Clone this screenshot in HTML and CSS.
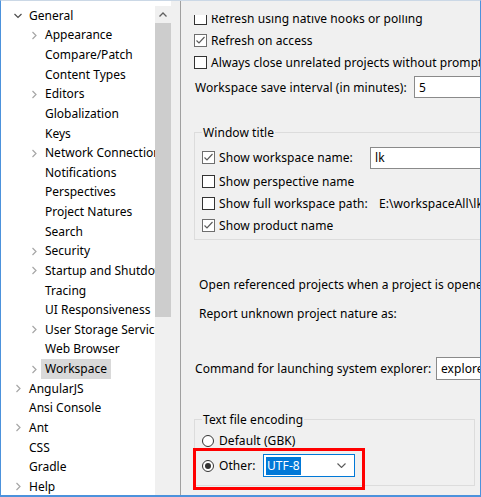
FILE: index.html
```html
<!DOCTYPE html>
<html>
<head>
<meta charset="utf-8">
<title>Preferences - Workspace</title>
<link rel="stylesheet" href="styles.css">
</head>
<body>
<div class="window">
  <aside class="tree-pane">
    <ul class="tree">
      <li class="row l0"><span class="tw"><svg width="8" height="8" viewBox="0 0 8 8"><polyline points="0.5,2 4,5.5 7.5,2" fill="none" stroke="#4d4d4d" stroke-width="1.2"/></svg></span><span class="lbl">General</span></li>
      <li class="row l1"><span class="tw"><svg width="8" height="9" viewBox="0 0 8 9"><polyline points="2.5,1 6,4.5 2.5,8" fill="none" stroke="#a6a6a6" stroke-width="1.2"/></svg></span><span class="lbl">Appearance</span></li>
      <li class="row l1"><span class="tw"></span><span class="lbl">Compare/Patch</span></li>
      <li class="row l1"><span class="tw"></span><span class="lbl">Content Types</span></li>
      <li class="row l1"><span class="tw"><svg width="8" height="9" viewBox="0 0 8 9"><polyline points="2.5,1 6,4.5 2.5,8" fill="none" stroke="#a6a6a6" stroke-width="1.2"/></svg></span><span class="lbl">Editors</span></li>
      <li class="row l1"><span class="tw"></span><span class="lbl">Globalization</span></li>
      <li class="row l1"><span class="tw"></span><span class="lbl">Keys</span></li>
      <li class="row l1"><span class="tw"><svg width="8" height="9" viewBox="0 0 8 9"><polyline points="2.5,1 6,4.5 2.5,8" fill="none" stroke="#a6a6a6" stroke-width="1.2"/></svg></span><span class="lbl">Network Connections</span></li>
      <li class="row l1"><span class="tw"></span><span class="lbl">Notifications</span></li>
      <li class="row l1"><span class="tw"></span><span class="lbl">Perspectives</span></li>
      <li class="row l1"><span class="tw"></span><span class="lbl">Project Natures</span></li>
      <li class="row l1"><span class="tw"></span><span class="lbl">Search</span></li>
      <li class="row l1"><span class="tw"><svg width="8" height="9" viewBox="0 0 8 9"><polyline points="2.5,1 6,4.5 2.5,8" fill="none" stroke="#a6a6a6" stroke-width="1.2"/></svg></span><span class="lbl">Security</span></li>
      <li class="row l1"><span class="tw"><svg width="8" height="9" viewBox="0 0 8 9"><polyline points="2.5,1 6,4.5 2.5,8" fill="none" stroke="#a6a6a6" stroke-width="1.2"/></svg></span><span class="lbl">Startup and Shutdown</span></li>
      <li class="row l1"><span class="tw"></span><span class="lbl">Tracing</span></li>
      <li class="row l1"><span class="tw"></span><span class="lbl">UI Responsiveness</span></li>
      <li class="row l1"><span class="tw"><svg width="8" height="9" viewBox="0 0 8 9"><polyline points="2.5,1 6,4.5 2.5,8" fill="none" stroke="#a6a6a6" stroke-width="1.2"/></svg></span><span class="lbl">User Storage Service</span></li>
      <li class="row l1"><span class="tw"></span><span class="lbl">Web Browser</span></li>
      <li class="row l1"><span class="tw"><svg width="8" height="9" viewBox="0 0 8 9"><polyline points="2.5,1 6,4.5 2.5,8" fill="none" stroke="#a6a6a6" stroke-width="1.2"/></svg></span><span class="lbl selected">Workspace</span></li>
      <li class="row l0"><span class="tw"><svg width="8" height="9" viewBox="0 0 8 9"><polyline points="2.5,1 6,4.5 2.5,8" fill="none" stroke="#a6a6a6" stroke-width="1.2"/></svg></span><span class="lbl">AngularJS</span></li>
      <li class="row l0"><span class="tw"></span><span class="lbl">Ansi Console</span></li>
      <li class="row l0"><span class="tw"><svg width="8" height="9" viewBox="0 0 8 9"><polyline points="2.5,1 6,4.5 2.5,8" fill="none" stroke="#a6a6a6" stroke-width="1.2"/></svg></span><span class="lbl">Ant</span></li>
      <li class="row l0"><span class="tw"></span><span class="lbl">CSS</span></li>
      <li class="row l0"><span class="tw"></span><span class="lbl">Gradle</span></li>
      <li class="row l0"><span class="tw"><svg width="8" height="9" viewBox="0 0 8 9"><polyline points="2.5,1 6,4.5 2.5,8" fill="none" stroke="#a6a6a6" stroke-width="1.2"/></svg></span><span class="lbl">Help</span></li>
    </ul>
    <div class="vscroll">
      <div class="sb-btn"><svg width="8" height="5" viewBox="0 0 8 5"><polyline points="0.5,4.5 4,1 7.5,4.5" fill="none" stroke="#606060" stroke-width="1.3"/></svg></div>
      <div class="sb-thumb"></div>
    </div>
  </aside>
  <div class="sash"></div>
  <main class="prefs">
    <div class="viewport">
      <div class="scroller">
        <div class="chk-row"><span class="cb"></span><span>Refresh using native hooks or polling</span></div>
        <div class="chk-row"><span class="cb on"><svg width="11" height="11" viewBox="0 0 11 11"><polyline points="1.5,5.5 4,8 9.5,2" fill="none" stroke="#5c5c5c" stroke-width="1.2"/></svg></span><span>Refresh on access</span></div>
        <div class="chk-row"><span class="cb"></span><span>Always close unrelated projects without prompt</span></div>
        <div class="field-row save-row"><span class="save-label">Workspace save interval (in minutes):</span><div class="txt save-input">5</div></div>

        <fieldset class="group window-title">
          <legend>Window title</legend>
          <div class="g-row first"><span class="cb on"><svg width="11" height="11" viewBox="0 0 11 11"><polyline points="1.5,5.5 4,8 9.5,2" fill="none" stroke="#5c5c5c" stroke-width="1.2"/></svg></span><span class="wlabel">Show workspace name:</span><div class="txt lk-input">lk</div></div>
          <div class="g-row"><span class="cb"></span><span>Show perspective name</span></div>
          <div class="g-row"><span class="cb"></span><span class="plabel">Show full workspace path:</span><span>E:\workspaceAll\lk</span></div>
          <div class="g-row"><span class="cb on"><svg width="11" height="11" viewBox="0 0 11 11"><polyline points="1.5,5.5 4,8 9.5,2" fill="none" stroke="#5c5c5c" stroke-width="1.2"/></svg></span><span>Show product name</span></div>
        </fieldset>

        <div class="text-row open-row">Open referenced projects when a project is opened</div>
        <div class="text-row report-row">Report unknown project nature as:</div>
        <div class="field-row cmd-row"><span class="cmd-label">Command for launching system explorer:</span><div class="txt cmd-input">explorer /E,/select=${selected_resource_loc}</div></div>

        <fieldset class="group encoding">
          <legend>Text file encoding</legend>
          <div class="r-row first"><span class="rb"></span><span>Default (GBK)</span></div>
          <div class="r-row second"><span class="rb on"></span><span class="olabel">Other:</span>
            <div class="combo"><span class="sel">UTF-8</span><svg class="dd" width="9" height="5" viewBox="0 0 9 5"><polyline points="0.5,0.5 4.5,4.5 8.5,0.5" fill="none" stroke="#5a5a5a" stroke-width="1.1"/></svg></div>
          </div>
        </fieldset>
      </div>
    </div>
  </main>
  <div class="highlight"></div>
</div>
</body>
</html>
```
FILE: styles.css
```css
* { box-sizing: border-box; margin: 0; padding: 0; }
html, body { width: 481px; height: 497px; overflow: hidden; }
body {
  font-family: "Noto Sans", "Segoe UI", sans-serif;
  font-size: 12px;
  color: #000;
  background: #fff;
}
.window {
  position: relative;
  width: 481px;
  height: 497px;
  display: flex;
  border-top: 1px solid #cbd8e6;
  border-left: 1px solid #4c92dc;
  border-right: 1px solid #4c92dc;
  border-bottom: 2px solid #4c92dc;
  background: #f0f0f0;
}

/* ---- tree ---- */
.tree-pane {
  display: flex;
  width: 170px;
  flex: none;
  background: #fff;
  padding-top: 5px;
}
.tree {
  width: 154px;
  overflow: hidden;
  list-style: none;
}
.row {
  display: flex;
  align-items: center;
  height: 19.625px;
  white-space: nowrap;
}
.tw {
  flex: none;
  width: 8px;
  height: 9px;
  display: flex;
  align-items: center;
  justify-content: center;
  margin-right: 7px;
}
.l0 .tw { margin-left: 13px; }
.l1 .tw { margin-left: 29px; }
.lbl { line-height: 20px; }
.selected {
  background: #d9d9d9;
  padding: 0 4px;
  margin-left: -4px;
}
.vscroll {
  width: 16px;
  flex: none;
  background: #f0f0f0;
  display: flex;
  flex-direction: column;
}
.sb-btn {
  height: 17px;
  display: flex;
  align-items: center;
  justify-content: center;
}
.sb-thumb {
  height: 294px;
  background: #cdcdcd;
}
.sash {
  width: 9px;
  flex: none;
  background: #f0f0f0;
}

/* ---- preference page ---- */
.prefs {
  flex: 1;
  min-width: 0;
  border-left: 1px solid #a0a0a0;
  padding-top: 14px;
  background: #f0f0f0;
  letter-spacing: 0.07px;
}
.viewport {
  height: 100%;
  overflow: hidden;
}
.scroller {
  margin-top: -8px;
  padding-left: 13px;
  white-space: nowrap;
}
.chk-row {
  display: flex;
  align-items: center;
  height: 22px;
}
.cb {
  flex: none;
  width: 13px;
  height: 13px;
  border: 1px solid #333;
  background: #fff;
  margin-right: 4px;
  display: flex;
  align-items: center;
  justify-content: center;
}
.cb.on { border-color: #6e6e6e; }
.field-row {
  display: flex;
  align-items: center;
}
.txt {
  flex: none;
  height: 22px;
  border: 1px solid #8a8a8a;
  background: #fff;
  padding-left: 4px;
  display: flex;
  align-items: center;
  overflow: hidden;
}
.save-row { margin-top: 3px; height: 22px; }
.save-label { width: 220px; padding-left: 1px; flex: none; }
.save-input { width: 120px; }

.group {
  border: 1px solid #dcdcdc;
  padding: 0 0 0 7px;
}
.group legend {
  padding: 0 1px;
  line-height: 17px;
}
.window-title {
  margin-top: 26px;
  width: 330px;
  padding-bottom: 2.5px;
}
.g-row {
  display: flex;
  align-items: center;
  height: 21.7px;
}
.g-row.first { margin-top: 5px; height: 23px; margin-bottom: 2px; }
.wlabel { width: 151px; flex: none; }
.plabel { width: 160px; flex: none; }
.lk-input { width: 120px; }

.text-row {
  height: 22px;
  line-height: 22px;
  padding-left: 5px;
}
.open-row { margin-top: 34px; }
.report-row { margin-top: 7px; }
.cmd-row { margin-top: 32px; height: 23px; }
.cmd-label { width: 242px; padding-left: 1px; flex: none; }
.cmd-input { width: 120px; height: 23px; }

.encoding {
  margin-top: 31px;
  width: 281px;
  padding-bottom: 8px;
}
.r-row {
  display: flex;
  align-items: center;
}
.r-row.first { margin-top: 2px; height: 22px; }
.r-row.second { margin-top: 2.5px; height: 23px; }
.rb {
  flex: none;
  width: 12px;
  height: 12px;
  border: 1px solid #333;
  border-radius: 50%;
  background: #fff;
  margin-right: 5px;
  display: flex;
  align-items: center;
  justify-content: center;
}
.rb.on::after {
  content: "";
  width: 6px;
  height: 6px;
  border-radius: 50%;
  background: #333;
}
.olabel { width: 44px; flex: none; }
.combo {
  width: 92px;
  height: 23px;
  border: 1px solid #0078d7;
  background: #fff;
  display: flex;
  align-items: center;
  padding-left: 2px;
}
.sel {
  background: #0078d7;
  color: #fff;
  line-height: 18px;
  padding: 0 1px;
}
.dd { margin-left: auto; margin-right: 8px; }

/* annotation overlay */
.highlight {
  position: absolute;
  left: 192px;
  top: 447px;
  width: 172px;
  height: 42px;
  border: 3px solid #f00;
  pointer-events: none;
}
```
